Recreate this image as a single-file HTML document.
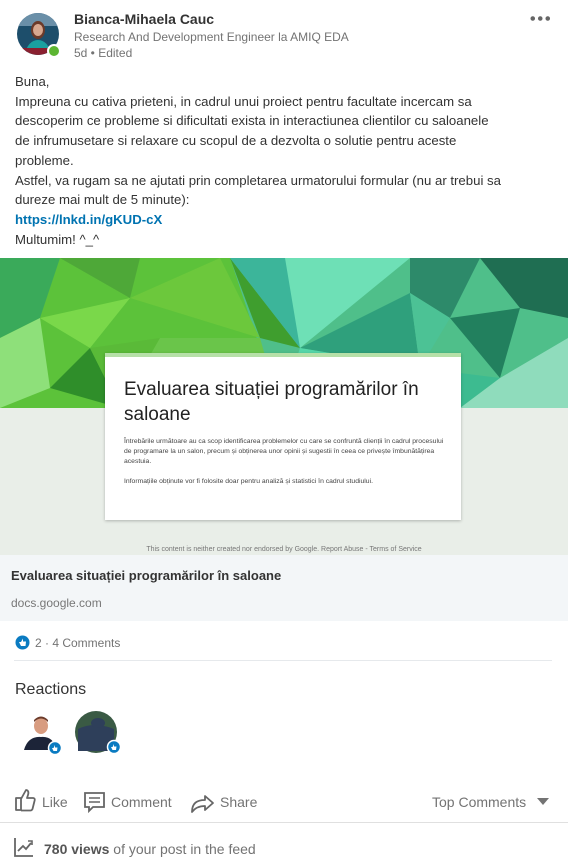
<!DOCTYPE html>
<html><head><meta charset="utf-8"><style>
body{margin:0;width:568px;height:859px;background:#fff;font-family:"Liberation Sans",sans-serif;position:relative;overflow:hidden;color:rgba(0,0,0,.9)}
.a{position:absolute}
.t{font-size:13.2px;line-height:19.7px;color:#333;left:15px;top:72px;width:545px;white-space:nowrap}
</style></head><body>
<svg class="a" style="left:16px;top:12px" width="44" height="46"><defs><clipPath id="c"><circle cx="22" cy="22" r="21"/></clipPath></defs><g clip-path="url(#c)"><rect width="44" height="44" fill="#1d4e6b"/><rect x="0" y="0" width="44" height="14" fill="#6a8fa8"/><ellipse cx="22" cy="18" rx="7" ry="9" fill="#6b3a2a"/><ellipse cx="22" cy="18" rx="5" ry="6" fill="#d8a890"/><path d="M8 44 Q12 28 22 28 Q32 28 36 44Z" fill="#1aa0a0"/><rect x="0" y="36" width="44" height="8" fill="#8a2030"/></g><circle cx="38" cy="39" r="6" fill="#5cb532" stroke="#fff" stroke-width="2"/></svg>
<div class="a" style="left:74px;top:11px;font-size:14px;font-weight:bold;color:#333">Bianca-Mihaela Cauc</div>
<div class="a" style="left:74px;top:30px;font-size:12px;color:#737373">Research And Development Engineer la AMIQ EDA</div>
<div class="a" style="left:74px;top:46px;font-size:12px;color:#737373">5d • Edited</div>
<div class="a" style="left:529px;top:16px;width:22px;height:5px;background:radial-gradient(circle,#666 2px,transparent 2.5px) 0 0/7.5px 5px repeat-x"></div>
<div class="a t">Buna,<br>Impreuna cu cativa prieteni, in cadrul unui proiect pentru facultate incercam sa<br>descoperim ce probleme si dificultati exista in interactiunea clientilor cu saloanele<br>de infrumusetare si relaxare cu scopul de a dezvolta o solutie pentru aceste<br>probleme.<br>Astfel, va rugam sa ne ajutati prin completarea urmatorului formular (nu ar trebui sa<br>dureze mai mult de 5 minute):<br><b style="color:#0073b1">https://lnkd.in/gKUD-cX</b><br>Multumim! ^_^</div>
<div class="a" style="left:0;top:258px;width:568px;height:297px;background:#e9eee8"></div>
<svg class="a" style="left:0;top:258px" width="568" height="150">
<rect width="568" height="150" fill="#4fbf8a"/>
<polygon points="0,0 230,0 280,150 0,150" fill="#5cc23a"/>
<polygon points="0,0 60,0 40,60 0,80" fill="#3aaa5a"/>
<polygon points="60,0 140,0 130,40" fill="#4ea838"/>
<polygon points="40,60 130,40 90,90" fill="#7ad84a"/>
<polygon points="130,40 220,0 260,80" fill="#6cc83c"/>
<polygon points="0,80 40,60 50,130 0,150" fill="#8ee07a"/>
<polygon points="50,130 90,90 120,150" fill="#2f8e2a"/>
<polygon points="90,90 160,80 120,150" fill="#5aba38"/>
<polygon points="160,80 260,80 280,150 120,150" fill="#6ac54a"/>
<polygon points="230,0 300,90 260,80" fill="#3f9e2e"/>
<polygon points="230,0 330,0 300,90" fill="#3cb59a"/>
<polygon points="285,0 410,0 300,90" fill="#6ee0b6"/>
<polygon points="300,90 410,35 420,110" fill="#2fa07c"/>
<polygon points="300,90 420,110 390,150 280,150" fill="#55d7a8"/>
<polygon points="410,0 480,0 450,60 410,35" fill="#2d8a6a"/>
<polygon points="450,60 520,50 500,120" fill="#22805e"/>
<polygon points="480,0 568,0 568,60 520,50" fill="#1f6e52"/>
<polygon points="420,110 500,120 460,150 390,150" fill="#3dbb90"/>
<polygon points="500,120 568,80 568,150 460,150" fill="#8fdcbc"/>
<polygon points="410,35 450,60 420,110" fill="#4cc295"/>
</svg>
<div class="a" style="left:105px;top:353px;width:356px;height:167px;background:#fff;box-shadow:0 1px 3px rgba(0,0,0,.25);border-top:4px solid #b6e0a8;box-sizing:border-box"></div>
<div class="a" style="left:124px;top:377px;width:330px;font-size:19px;line-height:25px;color:#222">Evaluarea situației programărilor în saloane</div>
<div class="a" style="left:124px;top:437px;width:322px;font-size:6.8px;line-height:10px;color:#444">Întrebările următoare au ca scop identificarea problemelor cu care se confruntă clienții în cadrul procesului de programare la un salon, precum și obținerea unor opinii și sugestii în ceea ce privește îmbunătățirea acestuia.<br><br>Informațiile obținute vor fi folosite doar pentru analiză și statistici în cadrul studiului.</div>
<div class="a" style="left:0;top:546px;width:568px;text-align:center;font-size:7px;color:#777">This content is neither created nor endorsed by Google. Report Abuse - Terms of Service</div>
<div class="a" style="left:0;top:555px;width:568px;height:66px;background:#f3f6f8"></div>
<div class="a" style="left:11px;top:568px;font-size:13px;font-weight:bold;color:#333">Evaluarea situației programărilor în saloane</div>
<div class="a" style="left:11px;top:596px;font-size:12px;color:#777">docs.google.com</div>
<svg class="a" style="left:15px;top:635px" width="15" height="15"><circle cx="7.5" cy="7.5" r="7" fill="#0a7bc1"/><path d="M4 7h2l2-3.5v3h3l-.5 4.5h-4.5z" fill="#fff"/></svg>
<div class="a" style="left:35px;top:636px;font-size:12px;color:#737373">2 · 4 Comments</div>
<div class="a" style="left:14px;top:660px;width:538px;height:1px;background:#e6e9ec"></div>
<div class="a" style="left:15px;top:681px;font-size:16px;color:#333">Reactions</div>
<svg class="a" style="left:20px;top:712px" width="44" height="44"><circle cx="22" cy="20" r="21" fill="#fff"/><ellipse cx="21" cy="14" rx="7" ry="8" fill="#d89c80"/><path d="M14 10 Q21 3 28 10 L28 8 Q21 1 14 8Z" fill="#6b3a2a"/><path d="M4 38 Q8 24 21 25 Q34 24 36 38Z" fill="#1c2438"/><circle cx="35" cy="36" r="6.5" fill="#0a7bc1" stroke="#fff" stroke-width="1.5"/><path d="M32 36h1.5l1.5-3v2.5h2.5l-.5 3.5h-3.5z" fill="#fff"/></svg>
<svg class="a" style="left:74px;top:711px" width="50" height="46"><circle cx="22" cy="21" r="21" fill="#3a5a44"/><path d="M4 18 Q20 10 40 18 L40 40 4 40Z" fill="#2e3f5a"/><ellipse cx="24" cy="12" rx="7" ry="5" fill="#2e3f5a"/><circle cx="40" cy="36" r="6.5" fill="#0a7bc1" stroke="#fff" stroke-width="1.5"/><path d="M37 36h1.5l1.5-3v2.5h2.5l-.5 3.5h-3.5z" fill="#fff"/></svg>
<svg class="a" style="left:14px;top:788px" width="22" height="24"><path d="M2 10h5v12H2zM7 11l5-9c2 0 3 2 2 5l-1 3h6c2 0 2 2 1.5 3l-2 8c-.5 1-1 1.5-2 1.5H7" fill="none" stroke="#666" stroke-width="1.8" stroke-linejoin="round"/></svg>
<div class="a" style="left:42px;top:794px;font-size:14px;color:#737373">Like</div>
<svg class="a" style="left:84px;top:792px" width="22" height="22"><path d="M1 1h19v14H9l-4 4V15H1z" fill="none" stroke="#666" stroke-width="1.8"/><path d="M5 6h11M5 10h11" stroke="#666" stroke-width="1.6"/></svg>
<div class="a" style="left:111px;top:794px;font-size:14px;color:#737373">Comment</div>
<svg class="a" style="left:190px;top:790px" width="26" height="24"><path d="M2 22c0-9 5-12 13-12V6l8 7-8 7v-4C9 16 5 18 2 22z" fill="none" stroke="#666" stroke-width="1.8" stroke-linejoin="round"/></svg>
<div class="a" style="left:220px;top:794px;font-size:14px;color:#737373">Share</div>
<div class="a" style="left:432px;top:794px;font-size:14px;color:#737373">Top Comments</div>
<svg class="a" style="left:537px;top:798px" width="12" height="8"><path d="M0 0h12L6 7z" fill="#737373"/></svg>
<div class="a" style="left:0;top:822px;width:568px;height:1px;background:#e0e0e0"></div>
<svg class="a" style="left:14px;top:837px" width="20" height="20"><path d="M1 1v18h18" fill="none" stroke="#666" stroke-width="1.8"/><path d="M4 14l5-5 3 3 5-6" fill="none" stroke="#666" stroke-width="1.8"/><path d="M14 4h4v4" fill="none" stroke="#666" stroke-width="1.6"/></svg>
<div class="a" style="left:44px;top:841px;font-size:14px;color:#737373"><b style="color:#555">780 views</b> of your post in the feed</div>
</body></html>
